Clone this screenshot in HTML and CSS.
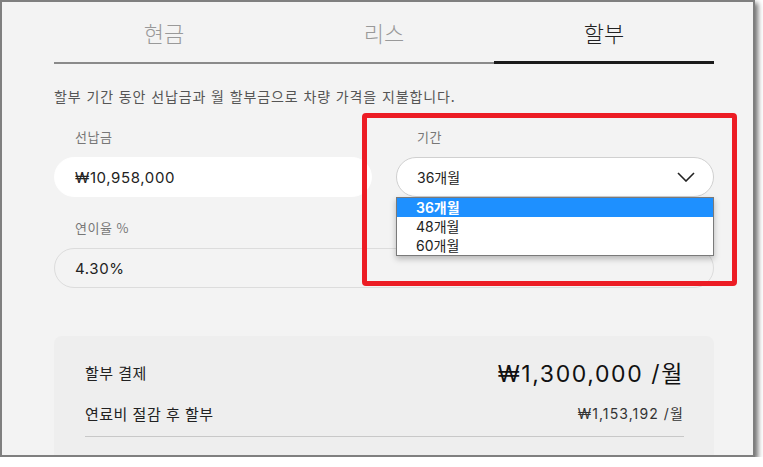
FILE: index.html
```html
<!DOCTYPE html>
<html lang="ko">
<head>
  <meta charset="UTF-8">
  <title>할부 계산</title>
  <link rel="stylesheet" href="styles.css">
</head>
<body>
  <div class="window">
    <div class="content">
      <nav class="tabs">
        <div class="tab">현금</div>
        <div class="tab">리스</div>
        <div class="tab active">할부</div>
      </nav>
      <p class="desc">할부 기간 동안 선납금과 월 할부금으로 차량 가격을 지불합니다.</p>

      <div class="form">
        <div class="field">
          <label class="label">선납금</label>
          <div class="input filled">₩10,958,000</div>
        </div>
        <div class="field period">
          <label class="label">기간</label>
          <div class="select">
            <span>36개월</span>
            <svg class="chev" width="18" height="10" viewBox="0 0 18 10"><path d="M1 1 L9 9 L17 1" fill="none" stroke="#222" stroke-width="1.6"/></svg>
          </div>
          <ul class="options">
            <li class="on">36개월</li>
            <li>48개월</li>
            <li>60개월</li>
          </ul>
        </div>
        <div class="field wide">
          <label class="label">연이율 %</label>
          <div class="input">4.30%</div>
        </div>
      </div>

      <div class="result">
        <div class="row main">
          <span class="name">할부 결제</span>
          <span class="big">₩1,300,000 /월</span>
        </div>
        <div class="row sub">
          <span class="name">연료비 절감 후 할부</span>
          <span class="small">₩1,153,192 /월</span>
        </div>
        <div class="divider"></div>
      </div>
    </div>
    <div class="mark"></div>
  </div>
</body>
</html>
```

FILE: styles.css
```css
* { margin:0; padding:0; box-sizing:border-box; }
body {
  background: #fff;
  font-family: Inter, "Noto Sans CJK KR", sans-serif;
  color: #222;
}
.window {
  position: relative;
  width: 755px;
  height: 457px;
  border: 2px solid #7f7f7f;
  background: #f3f3f3;
  box-shadow: 3px 3px 5px rgba(0,0,0,.55);
  overflow: hidden;
}
.content {
  padding: 0 39px 0 52px;
}
.tabs {
  display: flex;
}
.tab {
  flex: 1;
  height: 62px;
  padding-top: 16px;
  text-align: center;
  font-family: "Noto Sans CJK KR", sans-serif;
  font-size: 22px;
  font-weight: 300;
  line-height: 28px;
  color: #999;
  border-bottom: 2px solid #8a8a8a;
}
.tab.active {
  color: #222;
  border-bottom: 3px solid #1a1a1a;
}
.desc {
  margin-top: 22px;
  font-family: "Noto Sans CJK KR", sans-serif;
  font-size: 14px;
  letter-spacing: 0.9px;
  line-height: 20px;
  color: #555;
}
.form {
  display: grid;
  grid-template-columns: 318px 318px;
  column-gap: 24px;
  row-gap: 21px;
  margin-top: 21px;
}
.field { position: relative; }
.field.wide { grid-column: 1 / 3; }
.label {
  display: block;
  padding-left: 21px;
  font-family: "Noto Sans CJK KR", sans-serif;
  font-size: 13px;
  letter-spacing: 0.5px;
  line-height: 20px;
  color: #777;
  margin-bottom: 10px;
}
.input, .select {
  height: 40px;
  border-radius: 20px;
  padding: 0 20px;
  display: flex;
  align-items: center;
  font-size: 15px;
  letter-spacing: 0.6px;
  color: #222;
  border: 1px solid #dcdcdc;
}
.input.filled {
  background: #fff;
  border-color: #fff;
}
.select {
  background: #fff;
  border-color: #d0d0d0;
  justify-content: space-between;
  padding-right: 18px;
  font-size: 14px;
  letter-spacing: 0;
}
.options {
  position: absolute;
  top: 70px;
  left: 0;
  right: 0;
  list-style: none;
  background: #fff;
  border: 1px solid #7a7a7a;
  box-shadow: 0 3px 6px rgba(0,0,0,.25);
  z-index: 2;
}
.options li {
  height: 19px;
  line-height: 19px;
  padding-left: 19px;
  font-size: 14px;
  color: #222;
}
.options li.on {
  background: #1e90ff;
  color: #fff;
  font-weight: 600;
}
.result {
  margin-top: 48px;
  background: #eeeeee;
  border-radius: 8px 8px 0 0;
  padding: 18px 30px 0 31px;
  height: 140px;
}
.row {
  display: flex;
  justify-content: space-between;
  align-items: center;
}
.row.main { height: 36px; }
.row.sub { height: 22px; margin-top: 12px; }
.name {
  font-family: "Noto Sans CJK KR", sans-serif;
  font-size: 15px;
  letter-spacing: 0.5px;
  color: #222;
}
.big {
  font-size: 23px;
  letter-spacing: 1.6px;
  color: #111;
}
.small {
  font-size: 14px;
  letter-spacing: 1.1px;
  color: #333;
}
.divider {
  margin-top: 12px;
  height: 1px;
  background: #c8c8c8;
}
.mark {
  position: absolute;
  left: 360px;
  top: 111px;
  width: 375px;
  height: 173px;
  border: 5px solid #ec1c24;
  border-radius: 4px;
  z-index: 3;
}
```
